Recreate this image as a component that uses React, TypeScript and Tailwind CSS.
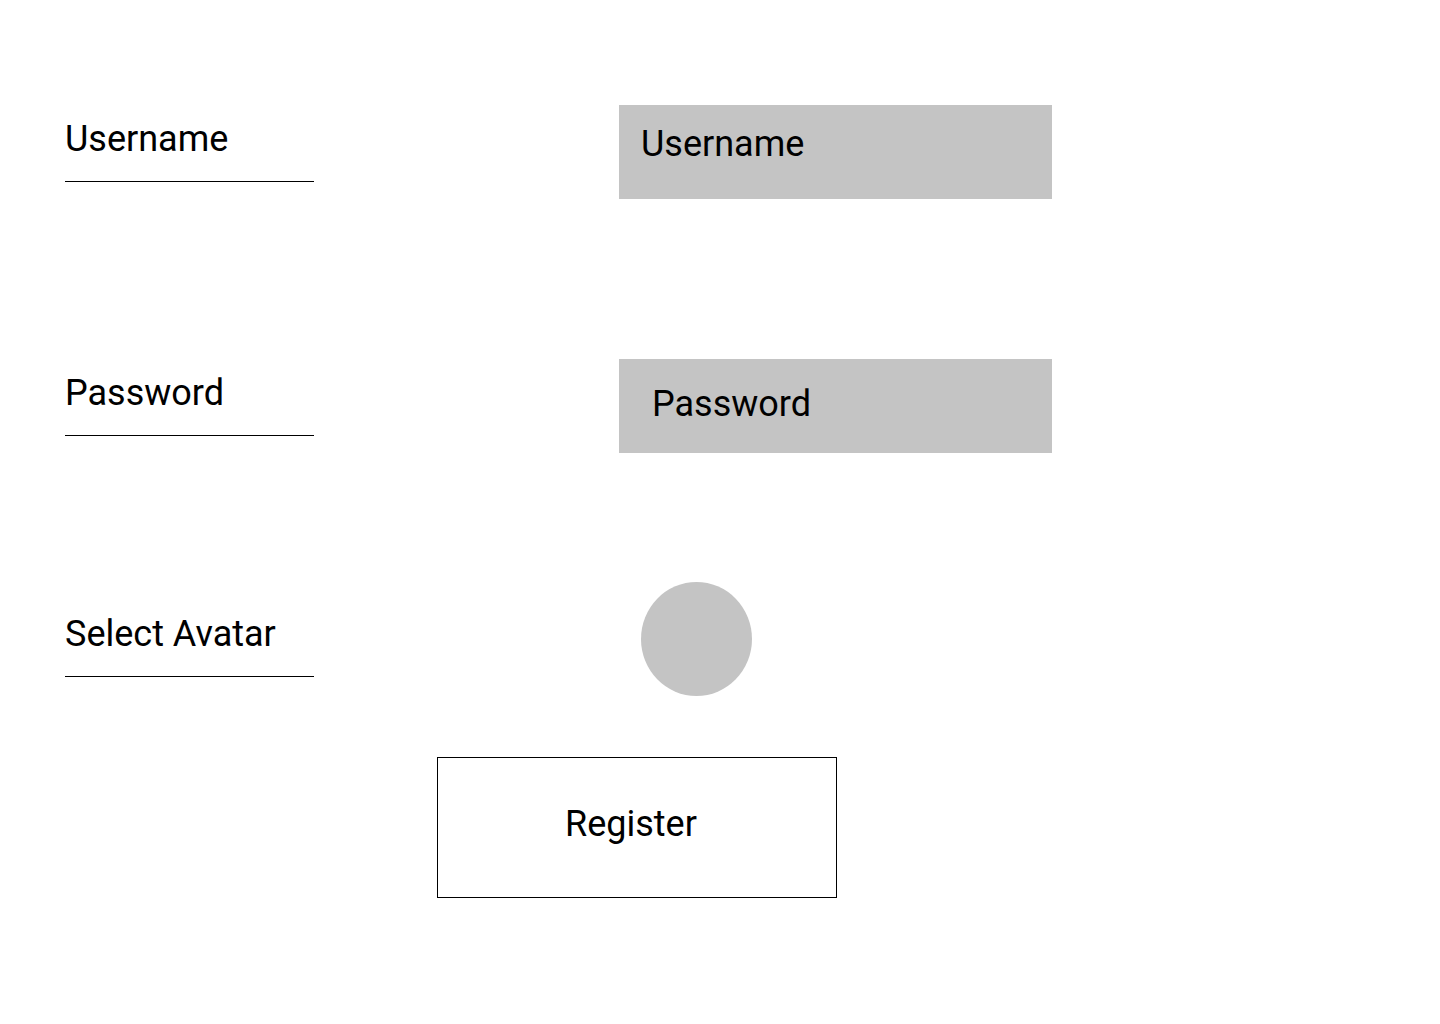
import React from "react";

function Label({ text }: { text: string }) {
  return (
    <div className="w-[249px]">
      <div className="text-[36px] leading-[42px] text-black">{text}</div>
      <div className="mt-[21px] h-px bg-black" />
    </div>
  );
}

export default function App() {
  return (
    <div
      className="min-h-screen w-[1440px] h-[1024px] bg-white pl-[65px] pt-[105px]"
      style={{ fontFamily: "Roboto, 'Noto Sans', sans-serif" }}
    >
      <div className="flex items-start">
        <div className="w-[554px] pt-[13px]">
          <Label text="Username" />
        </div>
        <div className="h-[94px] w-[433px] bg-[#c4c4c4] pl-[22px] pt-[18px] text-[36px] leading-[42px] text-black">
          Username
        </div>
      </div>

      <div className="mt-[160px] flex items-start">
        <div className="w-[554px] pt-[13px]">
          <Label text="Password" />
        </div>
        <div className="h-[94px] w-[433px] bg-[#c4c4c4] pl-[33px] pt-[24px] text-[36px] leading-[42px] text-black">
          Password
        </div>
      </div>

      <div className="mt-[129px] flex items-start">
        <div className="w-[554px] pt-[31px]">
          <Label text="Select Avatar" />
        </div>
        <div className="ml-[22px] h-[114px] w-[111px] rounded-[50%] bg-[#c4c4c4]" />
      </div>

      <div className="ml-[372px] mt-[61px] h-[141px] w-[400px] border border-black pl-[127px] pt-[45px] text-[36px] leading-[42px] text-black">
        Register
      </div>
    </div>
  );
}
